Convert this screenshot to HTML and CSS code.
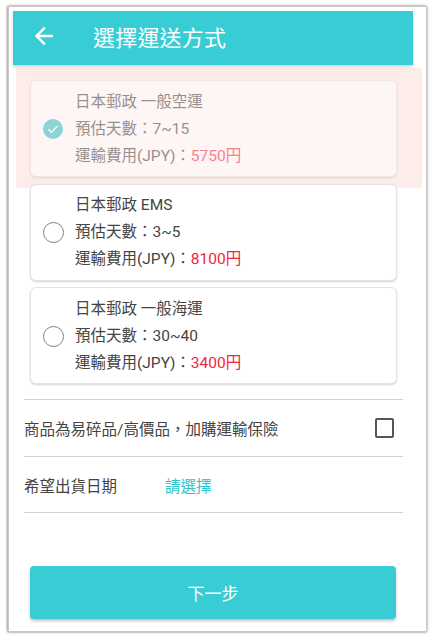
FILE: index.html
```html
<!DOCTYPE html>
<html lang="zh-Hant">
<head>
<meta charset="utf-8">
<title>選擇運送方式</title>
<link rel="stylesheet" href="styles.css">
</head>
<body>
<div class="frame">
  <header class="topbar">
    <svg class="back" width="18" height="18" viewBox="0 0 18 18" aria-hidden="true">
      <path d="M17 9H2M9 1.5L1.5 9L9 16.5" fill="none" stroke="#fff" stroke-width="2.4" stroke-linecap="square"/>
    </svg>
    <h1 class="title">選擇運送方式</h1>
  </header>

  <div class="options">
    <div class="highlight"></div>
    <div class="card card-selected">
      <div class="radio-wrap">
        <svg width="22" height="22" viewBox="0 0 22 22" aria-hidden="true">
          <circle cx="11" cy="11" r="10" fill="#33c2c6"/>
          <path d="M6.5 11.2l3 3 6-6.2" fill="none" stroke="#fff" stroke-width="1.3"/>
        </svg>
      </div>
      <div class="info">
        <div>日本郵政 一般空運</div>
        <div>預估天數：7~15</div>
        <div>運輸費用(JPY)：<span class="price">5750円</span></div>
      </div>
    </div>
    <div class="card">
      <div class="radio-wrap"><span class="radio"></span></div>
      <div class="info">
        <div>日本郵政 EMS</div>
        <div>預估天數：3~5</div>
        <div>運輸費用(JPY)：<span class="price">8100円</span></div>
      </div>
    </div>
    <div class="card">
      <div class="radio-wrap"><span class="radio"></span></div>
      <div class="info">
        <div>日本郵政 一般海運</div>
        <div>預估天數：30~40</div>
        <div>運輸費用(JPY)：<span class="price">3400円</span></div>
      </div>
    </div>
  </div>

  <div class="rows">
    <div class="row">
      <span class="row-label">商品為易碎品/高價品，加購運輸保險</span>
      <span class="checkbox"></span>
    </div>
    <div class="row">
      <span class="row-label date-label">希望出貨日期</span>
      <span class="row-value">請選擇</span>
    </div>
  </div>

  <button class="next" type="button">下一步</button>
</div>
</body>
</html>
```

FILE: styles.css
```css
* { box-sizing: border-box; }

html, body {
  margin: 0;
  padding: 0;
  background: #fff;
}

body {
  width: 435px;
  height: 640px;
  overflow: hidden;
  font-family: Roboto, "Noto Sans CJK TC", sans-serif;
  color: #444;
}

.frame {
  margin: 6px 8px 0 8px;
  width: 419px;
  height: 626px;
  background: #fff;
  border: 1px solid #c8c8c8;
  box-shadow: 0 0 3px rgba(0, 0, 0, 0.35), -1px 0 2px rgba(0, 0, 0, 0.25);
  display: flex;
  flex-direction: column;
  align-items: flex-start;
}

.topbar {
  margin: 4px 0 0 4px;
  width: 400px;
  height: 54px;
  background: #38cdd5;
  box-shadow: 0 2px 3px rgba(0, 0, 0, 0.18);
  display: flex;
  align-items: center;
  padding: 0 0 4px 22px;
  position: relative;
  z-index: 2;
}

.back { flex: none; }

.title {
  margin: 0 0 0 40px;
  font-size: 22px;
  font-weight: 400;
  color: #fff;
  letter-spacing: 0.2px;
}

.options {
  position: relative;
  margin: 15px 0 0 21px;
  width: 367px;
  display: flex;
  flex-direction: column;
  gap: 6.5px;
}

.highlight {
  position: absolute;
  top: -12px;
  left: -14px;
  width: 406px;
  height: 120px;
  background: #fdecea;
  z-index: 0;
}

.card {
  position: relative;
  z-index: 1;
  height: 97px;
  background: #fff;
  border: 1px solid #e4e4e4;
  border-radius: 6px;
  box-shadow: 0 1px 2px rgba(0, 0, 0, 0.18);
  display: flex;
  align-items: center;
}

.card-selected {
  opacity: 0.55;
}

.radio-wrap {
  width: 44px;
  display: flex;
  justify-content: center;
  padding-top: 1px;
}

.radio {
  width: 21px;
  height: 21px;
  border: 1.4px solid #808080;
  border-radius: 50%;
}

.info {
  font-size: 15.5px;
  line-height: 27px;
  padding-top: 1px;
}

.price { color: #f2253e; }

.rows {
  margin: 15px 0 0 15px;
  width: 379px;
}

.row {
  height: 57px;
  border-top: 1px solid #d2d2d2;
  display: flex;
  align-items: center;
  font-size: 15.5px;
  padding-right: 9px;
}

.row:last-child { border-bottom: 1px solid #d2d2d2; }

.row-label { flex: 1; }

.date-label {
  flex: none;
  width: 141px;
}

.row-value { color: #2fc4cd; }

.checkbox {
  width: 19px;
  height: 20px;
  border: 2px solid #555;
  border-radius: 2px;
}

.next {
  margin: 53px 0 0 21px;
  width: 366px;
  height: 53px;
  border: 0;
  border-radius: 4px;
  background: #38cdd5;
  box-shadow: 0 2px 3px rgba(0, 0, 0, 0.25);
  color: #fff;
  font-family: Roboto, "Noto Sans CJK TC", sans-serif;
  font-size: 17px;
  padding: 0;
}
```
